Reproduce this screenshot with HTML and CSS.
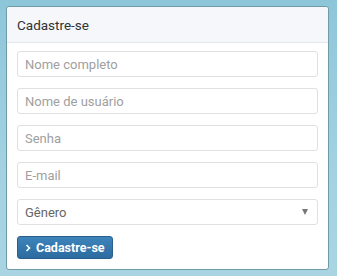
FILE: index.html
```html
<!DOCTYPE html>
<html lang="pt">
<head>
<meta charset="utf-8">
<title>Cadastre-se</title>
<link rel="stylesheet" href="styles.css">
</head>
<body>
<div class="panel">
  <div class="panel-heading">Cadastre-se</div>
  <form class="panel-body">
    <input class="field" type="text" placeholder="Nome completo">
    <input class="field" type="text" placeholder="Nome de usuário">
    <input class="field" type="password" placeholder="Senha">
    <input class="field" type="email" placeholder="E-mail">
    <div class="select-wrap">
      <select class="field select">
        <option>Gênero</option>
      </select>
      <span class="caret"></span>
    </div>
    <button class="btn" type="button"><svg class="chev" width="6" height="8" viewBox="0 0 6 8"><path d="M1.5 1 L4.5 4 L1.5 7" fill="none" stroke="#fff" stroke-width="1.6"/></svg>Cadastre-se</button>
  </form>
</div>
</body>
</html>
```

FILE: styles.css
```css
html, body {
  margin: 0;
  height: 100%;
}
body {
  padding: 6px 0 0 6px;
  box-sizing: border-box;
  background: linear-gradient(180deg, #8ec6d9 0%, #a2d2e2 60%, #a9d5e3 100%);
  font-family: Roboto, "Noto Sans", sans-serif;
}
.panel {
  width: 323px;
  box-sizing: border-box;
  background: #fff;
  border: 1px solid #6f9aa8;
  border-radius: 3px;
}
.panel-heading {
  height: 36px;
  box-sizing: border-box;
  padding: 10px 10px 0 10px;
  background: #f5f7fa;
  border-bottom: 1px solid #e3e8ed;
  border-radius: 3px 3px 0 0;
  font-size: 13.5px;
  color: #333;
  line-height: 17px;
}
.panel-body {
  margin: 0;
  padding: 8px 10px 10px 10px;
  display: flex;
  flex-direction: column;
  align-items: flex-start;
}
.field {
  display: block;
  width: 301px;
  height: 26px;
  box-sizing: border-box;
  margin: 0 0 11px 0;
  padding: 0 7px;
  border: 1px solid #dde1e4;
  border-radius: 3px;
  background: #fff;
  font-family: Roboto, "Noto Sans", sans-serif;
  font-size: 13px;
  color: #555;
  outline: none;
}
.field::placeholder {
  color: #a0a0a0;
}
.select-wrap {
  position: relative;
  height: 37px;
}
.select {
  appearance: none;
  -webkit-appearance: none;
  color: #666;
}
.caret {
  position: absolute;
  right: 10px;
  top: 10px;
  width: 0;
  height: 0;
  border-left: 3.5px solid transparent;
  border-right: 3.5px solid transparent;
  border-top: 6px solid #777;
}
.btn {
  display: flex;
  align-items: center;
  gap: 5px;
  height: 23px;
  width: 96px;
  box-sizing: border-box;
  padding: 0 0 0 7px;
  border: 1px solid #2a5f8c;
  border-radius: 3px;
  background: linear-gradient(180deg, #3d84bb 0%, #2c6ba0 100%);
  color: #fff;
  font-family: Roboto, "Noto Sans", sans-serif;
  font-weight: 700;
  font-size: 12.5px;
  cursor: pointer;
}
.chev {
  flex: none;
}
```
